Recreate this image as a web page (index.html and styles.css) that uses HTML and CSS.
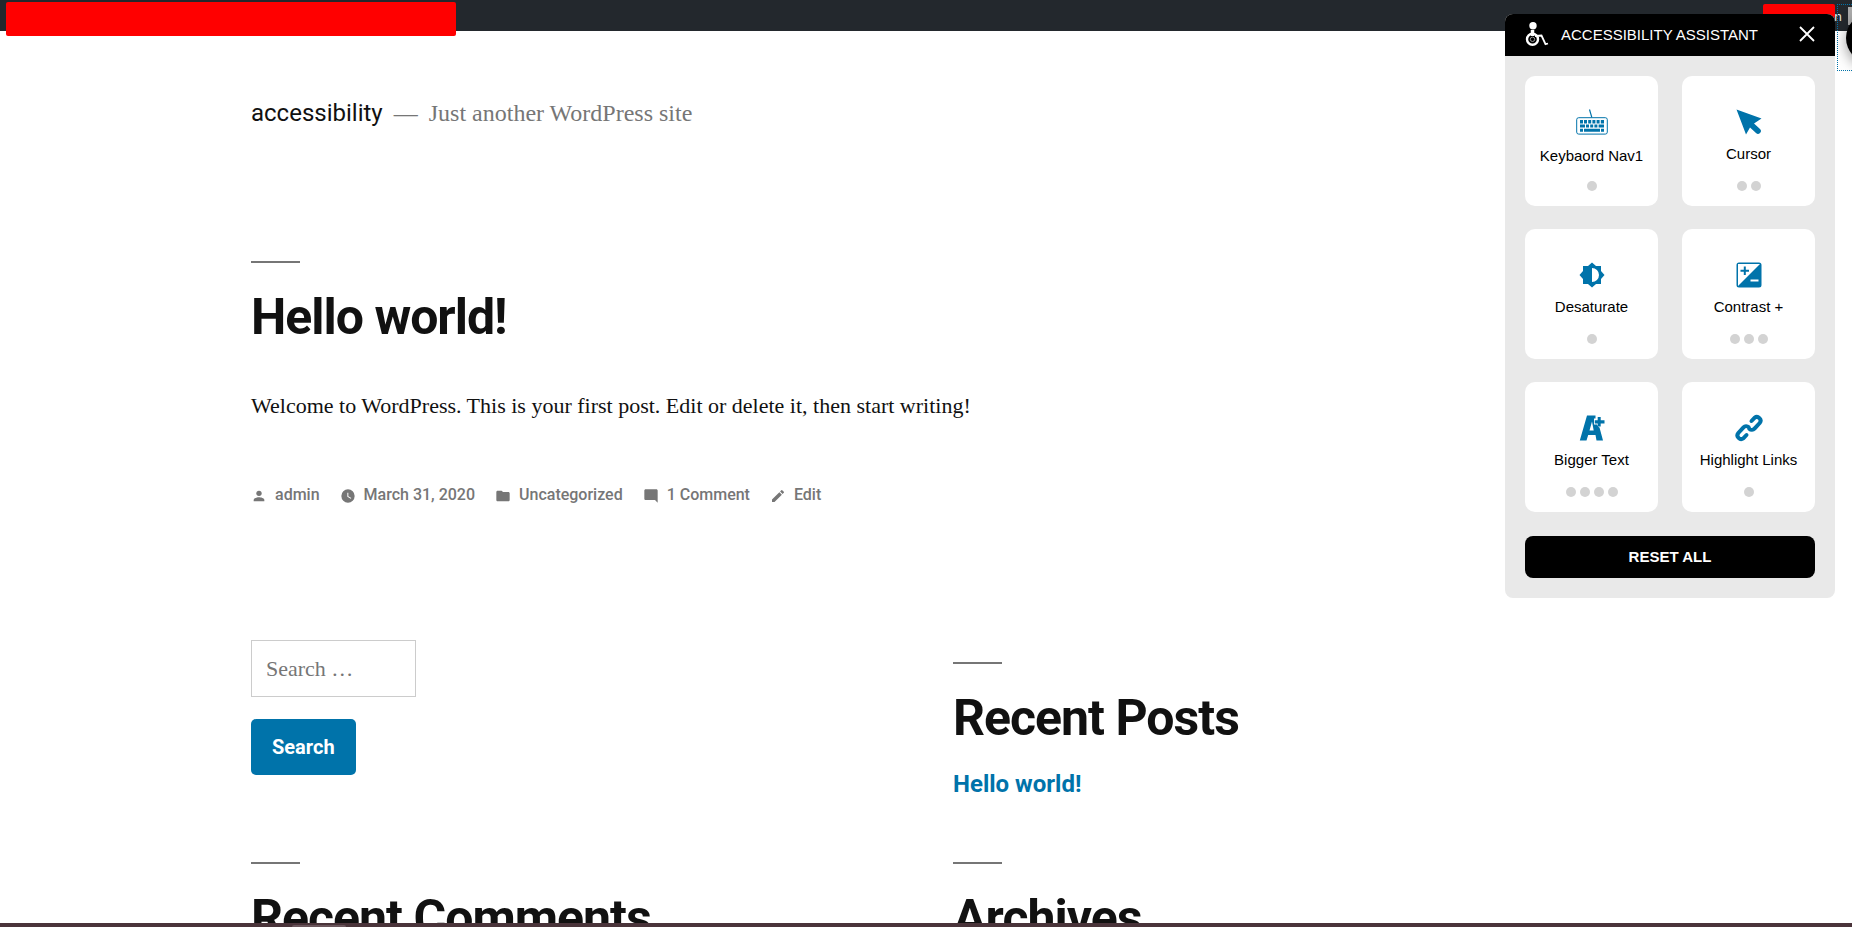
FILE: index.html
```html
<!DOCTYPE html>
<html lang="en">
<head>
<meta charset="utf-8">
<title>accessibility – Just another WordPress site</title>
<link rel="stylesheet" href="styles.css">
</head>
<body>
<div class="page">
  <div class="adminbar">
    <span class="redact redact-left"></span>
    <span class="adminbar-user"><span class="adminbar-name">n</span><span class="avatar"></span></span>
    <span class="redact redact-right"></span>
  </div>

  <header class="site-header">
    <a class="site-title" href="#">accessibility</a>
    <span class="site-dash">—</span>
    <span class="site-desc">Just another WordPress site</span>
  </header>

  <main class="content">
    <article>
      <h1 class="heading">Hello world!</h1>
      <p class="post-text">Welcome to WordPress. This is your first post. Edit or delete it, then start writing!</p>
      <footer class="meta">
        <a href="#"><svg viewBox="0 0 24 24"><circle cx="12" cy="8" r="4"/><path d="M12 14c-2.700 0-8 1.300-8 4v2h16v-2c0-2.700-5.300-4-8-4z"/></svg>admin</a>
        <a href="#"><svg viewBox="0 0 24 24"><path fill-rule="evenodd" d="M12 2a10 10 0 1 0 0 20 10 10 0 0 0 0-20zm4.200 14.200L11 13V7h1.500v5.200l4.500 2.700z"/></svg>March 31, 2020</a>
        <a href="#"><svg viewBox="0 0 24 24"><path d="M10 4H4c-1.100 0-2 .9-2 2v12c0 1.100.9 2 2 2h16c1.100 0 2-.9 2-2V8c0-1.100-.9-2-2-2h-8z"/></svg>Uncategorized</a>
        <a href="#"><svg viewBox="0 0 24 24"><path d="M22 4c0-1.100-.9-2-2-2H4c-1.100 0-2 .9-2 2v12c0 1.100.9 2 2 2h14l4 4z"/></svg>1 Comment</a>
        <a href="#"><svg viewBox="0 0 24 24"><path d="M3 17.250V21h3.750L17.810 9.940l-3.750-3.750zM20.710 7.040a1 1 0 0 0 0-1.410l-2.340-2.340a1 1 0 0 0-1.410 0l-1.830 1.830 3.750 3.750z"/></svg>Edit</a>
      </footer>
    </article>

    <aside class="widgets">
      <form class="search" onsubmit="return false">
        <input class="search-field" type="search" placeholder="Search …" aria-label="Search">
        <button class="search-button" type="submit">Search</button>
      </form>
      <section class="widget recent-posts">
        <h2 class="heading">Recent Posts</h2>
        <a class="post-link" href="#">Hello world!</a>
      </section>
      <section class="widget"><h2 class="heading">Recent Comments</h2></section>
      <section class="widget"><h2 class="heading">Archives</h2></section>
    </aside>
  </main>

  <button class="launcher" type="button" aria-label="Open accessibility assistant"><span class="launcher-disc"></span></button>

  <section class="panel" aria-label="Accessibility assistant">
    <header class="panel-head">
      <svg class="panel-logo" viewBox="0 0 24 24" fill="none" stroke="#fff"><circle cx="8" cy="3.800" r="3.700" fill="#fff" stroke="none"/><path d="M7.500 8v6" stroke-width="3.500"/><circle cx="7.500" cy="17.300" r="5.500" stroke-width="2.400"/><circle cx="7.500" cy="17.300" r="2.200" stroke-width="1" stroke="#999"/><path d="M10 14l6.500-.5 4 8.700 2.500-.7" stroke-width="1.800"/></svg>
      <span class="panel-title">ACCESSIBILITY ASSISTANT</span>
      <button class="close" type="button" aria-label="Close"><svg viewBox="0 0 16 16"><path d="M1 1l14 14M15 1L1 15" stroke="#fff" stroke-width="1.800"/></svg></button>
    </header>
    <div class="panel-body">
      <div class="cards">
        <button class="card" type="button">
          <svg class="icon icon-keyboard" viewBox="0 0 32 26"><g fill="none" stroke="#0073aa"><rect x=".7" y="8.700" width="30.600" height="16.400" rx="2"/><path d="M13.500.5l2.300 7.800" stroke-width="1.200"/></g><path d="M4 11h3v3.500H4zM8 11h3v3.500H8zM12.200 11h3v3.500h-3zM16.400 11h3v3.500h-3zM20.600 11h3v3.500h-3zM24.800 11h3.200v3.500h-3.200zM4 15.500h5v3H4zM10 15.500h3v3h-3zM14.200 15.500h3v3h-3zM18.400 15.500h3v3h-3zM22.600 15.500H28v3h-5.400zM4 19.700h3v3H4zM8 19.700h16v3H8zM25 19.700h3v3h-3z"/></svg>
          <span class="label">Keybaord Nav1</span><span class="dots"><i></i></span>
        </button>
        <button class="card" type="button">
          <svg class="icon" viewBox="0 0 26 26"><path d="M.5.5L25.500 9.500 18 14.500l6 5.500a2.500 2.500 0 0 1-4 4l-6-5.500-4 7z"/></svg>
          <span class="label">Cursor</span><span class="dots"><i></i><i></i></span>
        </button>
        <button class="card" type="button">
          <svg class="icon" viewBox="0 0 26 26"><path fill-rule="evenodd" d="M13 .5l4 3.500h5v5l3.500 4-3.500 4v5h-5l-4 3.500L9 22H4v-5L.5 13 4 9V4h5zM13 6v14a7 7 0 0 0 0-14z"/></svg>
          <span class="label">Desaturate</span><span class="dots"><i></i></span>
        </button>
        <button class="card" type="button">
          <svg class="icon" viewBox="0 0 26 26"><path fill-rule="evenodd" d="M3 .5h20A2.500 2.500 0 0 1 25.500 3v20a2.500 2.500 0 0 1-2.500 2.500H3A2.500 2.500 0 0 1 .5 23V3A2.500 2.500 0 0 1 3 .5zM2 2v22L24 2zM14.500 17.500h8v2h-8zM7.800 4.500h2v3.200H13v2H9.800V13h-2V9.700H4.500v-2h3.300z"/></svg>
          <span class="label">Contrast +</span><span class="dots"><i></i><i></i><i></i></span>
        </button>
        <button class="card" type="button">
          <svg class="icon" viewBox="0 0 26 26"><path fill-rule="evenodd" d="M8 .5h8.500v3H15v6h3l1.500 2.500 1 .5L24 25.500h-6.500L16.500 20H9.200L7.500 25.500H.8zM10.500 15.500h4.200L13 6.500z"/><path d="M18.700 2h3v3.200h3.800v3.200h-3.800v3.100h-3V8.400h-2.900V5.200h2.900z"/></svg>
          <span class="label">Bigger Text</span><span class="dots"><i></i><i></i><i></i><i></i></span>
        </button>
        <button class="card" type="button">
          <svg class="icon" viewBox="0 0 26 26"><g fill="none" stroke="#0073aa" stroke-width="4" stroke-linecap="round" stroke-linejoin="round"><path d="M15.500 6l3-3.200a3.700 3.700 0 0 1 5.200 5.200l-5.200 5.700a3.700 3.700 0 0 1-5.200.2"/><path d="M10.500 20l-3 3.200a3.700 3.700 0 0 1-5.200-5.200l5.200-5.700a3.700 3.700 0 0 1 5.200-.2"/></g></svg>
          <span class="label">Highlight Links</span><span class="dots"><i></i></span>
        </button>
      </div>
      <button class="reset" type="button">RESET ALL</button>
    </div>
  </section>
  <div class="dock"><span class="dock-tab"></span></div>
</div>
</body>
</html>
```
FILE: styles.css
```css
* { box-sizing: border-box; }
body { margin: 0; background: #fff; color: #111; font-family: "Liberation Serif", "Times New Roman", serif; font-size: 22px; }
a { color: inherit; text-decoration: none; }
button { border: 0; padding: 0; cursor: pointer; }
.page { position: relative; height: 100vh; overflow: hidden; }

.adminbar { position: relative; height: 31px; background: #23282d; display: flex; justify-content: flex-end; }
.adminbar-user { display: flex; align-items: center; gap: 6px; color: #eee; font: 13px/28px "Open Sans", sans-serif; }
.avatar { width: 4px; height: 18px; background: #aaa; }
.redact { position: absolute; background: #f00; border-radius: 2px; }
.redact-left { left: 6px; top: 2px; width: 450px; height: 34px; }
.redact-right { right: 17px; top: 4px; width: 72px; height: 14px; }

.site-header { display: flex; align-items: baseline; gap: 11px; padding: 66px 0 0 251px; line-height: 32px; color: #767676; font-size: 24px; }
.site-title { color: #111; font-family: Roboto, sans-serif; }

.content { padding: 132px 197px 0 251px; }
.heading { margin: 0; font: 700 50px/60px Roboto, sans-serif; letter-spacing: -1px; }
.heading::before { content: ""; display: block; width: 49px; height: 2px; margin-bottom: 24px; background: #767676; }
.post-text { margin: 39px 0 0; line-height: 40px; }
.meta { display: flex; gap: 20px; margin-top: 52px; color: #767676; font: 500 16px/34px Roboto, sans-serif; }
.meta a { display: flex; align-items: center; gap: 8px; }
.meta svg { width: 16px; height: 16px; margin-top: 2px; fill: currentColor; }

.widgets { display: grid; grid-template-columns: 1fr 1fr; margin-top: 128px; }
.search { display: flex; flex-direction: column; align-items: flex-start; gap: 22px; height: 222px; }
.search-field { width: 165px; height: 57px; padding: 0 14px; border: 1px solid #ccc; background: #fff; font: 22px "Liberation Serif", serif; color: #111; }
.search-field::placeholder { color: #767676; opacity: 1; }
.search-button { height: 56px; padding: 0 21px; border-radius: 5px; background: #0073aa; color: #fff; font: 700 20px Roboto, sans-serif; }
.recent-posts { padding-top: 22px; }
.post-link { display: block; margin-top: 16px; color: #0073aa; font: 700 24px/40px Roboto, sans-serif; }

.launcher { position: absolute; top: 4px; right: -50px; width: 65px; height: 67px; border: 1px dotted #0073aa; background: transparent; }
.launcher-disc { display: block; width: 50px; height: 50px; margin-left: 8px; border-radius: 50%; background: #000; box-shadow: 0 4px 14px rgba(0,0,0,.4); }

.panel { position: absolute; top: 14px; right: 17px; width: 330px; border-radius: 8px; overflow: hidden; background: #e9e9e9; font: 15px "Liberation Sans", Arial, sans-serif; }
.panel-head { display: flex; align-items: center; height: 42px; padding: 0 20px 2px; background: #000; color: #fff; }
.panel-logo { width: 24px; height: 24px; margin-right: 12px; }
.panel-title { flex: 1; white-space: nowrap; }
.close { width: 16px; height: 16px; background: none; }
.close svg { display: block; }
.panel-body { padding: 20px; }
.cards { display: grid; grid-template-columns: 1fr 1fr; gap: 23px 24px; }
.card { display: flex; flex-direction: column; align-items: center; height: 130px; padding-top: 33px; border-radius: 10px; background: #fff; color: #000; font: inherit; }
.icon { width: 26px; height: 26px; fill: #0073aa; overflow: visible; }
.icon-keyboard { width: 32px; margin-bottom: 2px; }
.label { margin-top: 10px; line-height: 18px; }
.dots { display: flex; gap: 4px; margin-top: auto; padding-bottom: 15px; }
.dots i { width: 10px; height: 10px; border-radius: 50%; background: #d3d3d3; }
.reset { width: 100%; height: 42px; margin-top: 24px; padding-bottom: 2px; border-radius: 8px; background: #000; color: #fff; font: 700 15px "Liberation Sans", Arial, sans-serif; }

.dock { position: absolute; left: 0; right: 0; bottom: 0; height: 4px; background: #4a343a; }
.dock-tab { display: block; width: 54px; height: 2px; margin: 2px 0 0 292px; border-radius: 2px 2px 0 0; background: #6b565c; }
```
